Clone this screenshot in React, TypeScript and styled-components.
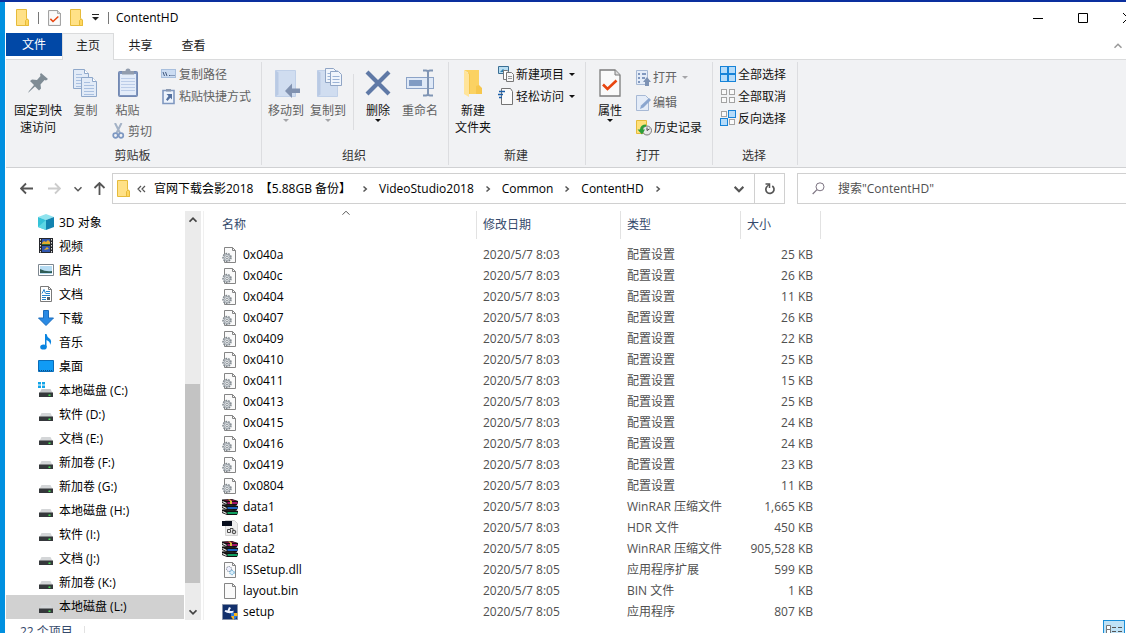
import React from "react";
import styled, { createGlobalStyle, css } from "styled-components";

const GlobalStyle = createGlobalStyle`
  *, *::before, *::after { box-sizing: border-box; }
  html, body, #root { height: 100%; }
  body {
    margin: 0;
    overflow: hidden;
    font: 12px/17px "Open Sans", "Noto Sans CJK SC", sans-serif;
    color: #000;
  }
  button, input {
    font: inherit;
    color: inherit;
    background: none;
    border: 0;
    padding: 0;
    margin: 0;
  }
  a { color: inherit; text-decoration: none; }
  svg { display: block; flex: none; }
`;

/* ---------- desktop and window ---------- */

const Desktop = styled.div`
  height: 100vh;
  overflow: hidden;
  padding: 2px 0 0 6px;
  background: linear-gradient(#0a2f9e, #0a2f9e) top / 100% 2px no-repeat,
    linear-gradient(90deg, #0090e0 0 5px, #fff 5px) 0 0 / 100% 100%;
`;

const Window = styled.main`
  display: flex;
  flex-direction: column;
  width: calc(100% + 24px);
  height: calc(100% + 11px);
  background: #fff;
`;

const TitleBar = styled.header`
  display: flex;
  align-items: center;
  height: 31px;
  flex: none;
  padding-left: 10px;
`;

const QuickAccess = styled.div`
  display: flex;
  align-items: center;
  gap: 9px;
`;

const QuickButton = styled.button`
  display: flex;
`;

const Rule = styled.span`
  width: 1px;
  height: 12px;
  background: #777;
`;

const Title = styled.h1`
  margin: 0 0 0 7px;
  font-size: 12px;
  font-weight: 400;
  flex: 1;
`;

const CaptionButton = styled.button`
  display: flex;
  align-items: center;
  justify-content: center;
  width: 45px;
  height: 30px;
`;

/* ---------- ribbon ---------- */

const Tabs = styled.nav`
  display: flex;
  flex: none;
  height: 27px;
  border-bottom: 1px solid #dadbdc;
`;

const Tab = styled.button<{ $kind?: "file" | "active" }>`
  width: 53px;
  height: 24px;
  color: #222;
  ${(p) =>
    p.$kind === "file" &&
    css`
      width: 56px;
      height: 23px;
      color: #fff;
      background: #0148a6;
    `}
  ${(p) =>
    p.$kind === "active" &&
    css`
      width: 52px;
      height: 27px;
      padding-bottom: 3px;
      background: #f2f3f4;
      border: 1px solid #dadbdc;
      border-bottom: 0;
    `}
`;

const CollapseButton = styled.button`
  display: flex;
  align-items: center;
  margin-left: auto;
  padding-right: 28px;
`;

const Ribbon = styled.section`
  display: flex;
  flex: none;
  height: 108px;
  padding: 2px 0;
  background: #f1f2f4;
  border-bottom: 1px solid #d0d1d3;
`;

const Group = styled.div<{ $width: number }>`
  display: flex;
  flex-direction: column;
  width: ${(p) => p.$width}px;
  border-right: 1px solid #dcdde0;
`;

const GroupBody = styled.div<{ $pad: number }>`
  display: flex;
  flex: 1;
  padding-left: ${(p) => p.$pad}px;
`;

const GroupLabel = styled.div`
  text-align: center;
  height: 18px;
  padding-right: 2px;
  color: #333;
`;

const BigButton = styled.button<{ $width: number; $dim?: boolean }>`
  display: flex;
  flex-direction: column;
  align-items: center;
  width: ${(p) => p.$width}px;
  height: 76px;
  padding-top: 5px;
  color: ${(p) => (p.$dim ? "#626262" : "#111")};
  white-space: nowrap;
`;

const BigIcon = styled.span`
  display: flex;
  align-items: center;
  height: 32px;
  margin-bottom: 3px;
`;

const Stack = styled.div<{ $left?: number; $top?: number }>`
  display: flex;
  flex-direction: column;
  padding-top: ${(p) => p.$top ?? 1}px;
  padding-left: ${(p) => p.$left ?? 0}px;
`;

const PairStack = styled.div`
  display: grid;
  grid-template: 60px 18px / 43px 43px;
`;

const SmallButton = styled.button<{ $height?: number; $dim?: boolean }>`
  display: flex;
  align-items: center;
  gap: 2px;
  height: ${(p) => p.$height ?? 22}px;
  color: ${(p) => (p.$dim ? "#626262" : "#111")};
  white-space: nowrap;
`;

const CutButton = styled(SmallButton)`
  grid-column: 2;
  padding-left: 5px;
  gap: 3px;
`;

const Divider = styled.span`
  width: 1px;
  height: 56px;
  margin: 12px 5px 0 4px;
  background: #dcdde0;
`;

const DropArrow = styled.span<{ $dim?: boolean; $side?: boolean }>`
  border: 3px solid transparent;
  border-top-color: ${(p) => (p.$dim ? "#a5a5a8" : "#111")};
  border-bottom: 0;
  margin-left: ${(p) => (p.$side ? 3 : 0)}px;
`;

/* ---------- address row ---------- */

const AddressRow = styled.div`
  display: flex;
  flex: none;
  height: 36px;
  padding-top: 5px;
`;

const NavButtons = styled.div`
  display: grid;
  grid-template-columns: 28px 28px 20px 22px;
  width: 106px;
  padding-left: 6px;
`;

const IconButton = styled.button`
  display: flex;
  align-items: center;
  justify-content: center;
`;

const AddressBox = styled.div`
  display: flex;
  align-items: center;
  flex: 1;
  border: 1px solid #d0d0d0;
  padding-left: 4px;
  white-space: pre;
`;

const Overflow = styled.button`
  display: flex;
  margin: 0 8px 0 7px;
`;

const Crumb = styled.a``;

const CrumbArrow = styled.span`
  display: flex;
  justify-content: center;
  width: 28px;
`;

const AddressEnd = styled.div`
  display: flex;
  align-self: stretch;
  margin-left: auto;
  button { width: 30px; }
  button + button { border-left: 1px solid #d0d0d0; }
`;

const SearchBox = styled.label`
  display: flex;
  align-items: center;
  gap: 13px;
  width: 353px;
  margin-left: 12px;
  padding-left: 14px;
  border: 1px solid #d0d0d0;
`;

const SearchInput = styled.input`
  flex: 1;
  outline: 0;
  &::placeholder { color: #505050; opacity: 1; }
`;

/* ---------- body ---------- */

const Body = styled.div`
  display: flex;
  flex: 1;
  min-height: 0;
  padding-top: 7px;
`;

const Tree = styled.ul`
  width: 178px;
  margin: 0 1px 0 0;
  padding: 0;
  list-style: none;
  overflow: hidden;
`;

const TreeLink = styled.a<{ $selected?: boolean }>`
  display: flex;
  align-items: center;
  gap: 5px;
  height: 24px;
  padding: 0 0 2px 32px;
  background: ${(p) => (p.$selected ? "#d1d1d1" : "transparent")};
`;

const ScrollBar = styled.div`
  display: flex;
  flex-direction: column;
  width: 16px;
  margin-right: 2px;
  background: #ebebeb;
  button { height: 17px; }
`;

const Track = styled.div<{ $grow: number; $thumb?: boolean }>`
  flex: ${(p) => p.$grow} 0 0;
  margin-right: 1px;
  background: ${(p) => (p.$thumb ? "#c3c3c3" : "transparent")};
`;

const FilePane = styled.section`
  flex: 1;
  overflow: hidden;
  padding-left: 12px;
  border-left: 1px solid #f0f0f0;
`;

const Table = styled.table`
  table-layout: fixed;
  width: 605px;
  border-collapse: collapse;
`;

const Head = styled.th<{ $width: number }>`
  width: ${(p) => p.$width}px;
  height: 33px;
  padding: 0 0 5px;
  font-weight: 400;
  text-align: left;
  color: #34496b;
`;

const HeadCell = styled.div`
  position: relative;
  height: 28px;
  padding-left: 6px;
  line-height: 27px;
  border-right: 1px solid #e2e2e2;
`;

const SortMark = styled.span`
  position: absolute;
  top: -2px;
  left: calc(50% - 4px);
`;

const Cell = styled.td<{ $right?: boolean }>`
  height: 21px;
  padding: 0 8px 0 6px;
  color: #505050;
  white-space: nowrap;
  text-align: ${(p) => (p.$right ? "right" : "left")};
`;

const FileName = styled.a`
  display: flex;
  align-items: center;
  gap: 5px;
  color: #000;
`;

const StatusBar = styled.footer`
  display: flex;
  align-items: center;
  flex: none;
  height: 24px;
  padding: 0 3px 0 14px;
  color: #34496b;
`;

const StatusCount = styled.span`
  padding-right: 11px;
  height: 12px;
  line-height: 12px;
  margin-right: auto;
  border-right: 1px solid #e2e2e2;
`;

const ViewButton = styled.button<{ $on?: boolean }>`
  display: flex;
  justify-content: center;
  width: 22px;
  height: 24px;
  padding-top: 4px;
  border: 1px solid ${(p) => (p.$on ? "#1a8fd8" : "transparent")};
  background: ${(p) => (p.$on ? "#bfe2f6" : "transparent")};
`;

/* ---------- icons ---------- */

const Folder = () => (
  <svg width="13" height="17" viewBox="0 0 13 17">
    <path d="M.5.5h10v9l2 1.500v5.500H.5z" fill="#ffe187" stroke="#e6bb3a" />
    <path d="M9.500 16.500v-5l1.500-1.500 1.500 1v5.500z" fill="#ffd75e" stroke="#e6bb3a" />
  </svg>
);

const CheckPage = ({ w = 13, h = 16 }: { w?: number; h?: number }) => (
  <svg width={w} height={h} viewBox="0 0 22 28" preserveAspectRatio="none">
    <path d="M1 1h15l5 5v21H1z" fill="#fafafa" stroke="#7c7c7c" strokeWidth="1.300" />
    <path d="M16 1v5h5" fill="#ddd" stroke="#7c7c7c" />
    <path d="M4 15.500l4.500 4.500 9-8.500" fill="none" stroke="#e8450f" strokeWidth="2.600" />
  </svg>
);

const Pin = () => (
  <svg width="22" height="22" viewBox="0 0 22 22">
    <path d="M14 1l7 6-2 1.500-1.500-.5-4 4.500.5 4-2 2-4-4-6 5.500L1 21l1-2 5-6-4-4 2-1.500 5 .5 3.500-4-.5-1.500z" fill="#7f8c95" />
  </svg>
);

const CopyIcon = () => (
  <svg width="25" height="28" viewBox="0 0 25 28">
    {[[0, 0], [8, 8]].map(([x, y]) => (
      <g key={x} transform={`translate(${x} ${y})`}>
        <path d="M.5.5h11l4 4v15H.5z" fill="#e2ebf7" stroke="#8fa8ca" />
        <path d="M11.500.5v4h4" fill="#fff" stroke="#8fa8ca" />
        <path d="M3 5.500h6M3 8.500h10M3 11.500h10M3 14.500h10M3 17.500h10" stroke="#a9c0e0" />
      </g>
    ))}
  </svg>
);

const PasteIcon = () => (
  <svg width="20" height="30" viewBox="0 0 20 30">
    <rect x=".5" y="3.500" width="19" height="25" rx="1" fill="#7f95bd" stroke="#7288b2" />
    <rect x="2" y="6" width="16" height="21" fill="#e3ecf9" />
    <path d="M4 6.500V3h3.500Q7.500.5 10 .5T12.500 3H16v3.500z" fill="#929dae" />
    <path d="M3 10.500h14M3 13.500h14M3 16.500h14M3 19.500h14M3 22.500h14" stroke="#bccde8" />
  </svg>
);

const Scissors = () => (
  <svg width="13" height="16" viewBox="0 0 13 16">
    <path d="M3 0l5 10M9.500 0L4.500 10" stroke="#a3b2c6" strokeWidth="2" />
    <circle cx="3.500" cy="12.500" r="2.300" fill="none" stroke="#7d98c2" strokeWidth="1.700" />
    <circle cx="9" cy="12.500" r="2.300" fill="none" stroke="#7d98c2" strokeWidth="1.700" />
  </svg>
);

const CopyPath = () => (
  <svg width="16" height="10" viewBox="0 0 16 10">
    <rect x=".5" y=".5" width="14" height="8" fill="#cbdcf2" stroke="#a8bfdd" />
    <path d="M2 3l1.500 4M4.500 3L6 7M8 6.500h1.500M10.500 6.500h1M12.500 6.500h1" stroke="#42597e" />
  </svg>
);

const PasteShortcut = () => (
  <svg width="16" height="17" viewBox="0 0 16 17">
    <path d="M2 2.500h11v13H2z" fill="#eef4fc" stroke="#8098c0" strokeWidth="1.600" />
    <path d="M5 1h5v2.500H5z" fill="#8b9ab2" />
    <path d="M5.500 6H11v5.500L9.300 9.800 6.500 13 5 11.500 7.500 8z" fill="#54719f" />
  </svg>
);

const Book = ({ children }: { children: React.ReactNode }) => (
  <svg width="28" height="30" viewBox="0 0 28 30">
    <path d="M3.500 2.500h20v26h-20z" fill="#d0ddf0" stroke="#c0d0e8" />
    <path d="M3.500 2.500l3 2v22l-3 2z" fill="#b9cae4" />
    {children}
  </svg>
);

const MoveTo = () => (
  <Book>
    <path d="M28 20.500h-8v-5l-7 7.500 7 7v-5h8z" fill="#8192b0" />
  </Book>
);

const CopyTo = () => (
  <Book>
    {[[11, 0], [16, 3]].map(([x, y]) => (
      <g key={x} transform={`translate(${x} ${y})`}>
        <path d="M.5.5h8l3 3v11H.5z" fill="#f0f5fc" stroke="#90a5c5" />
        <path d="M2.500 5.500h7M2.500 8.500h7M2.500 11.500h7" stroke="#9bb3d6" />
      </g>
    ))}
  </Book>
);

const DeleteIcon = () => (
  <svg width="26" height="26" viewBox="0 0 26 26">
    <path d="M2 2l22 22M24 2L2 24" stroke="#5f79a6" strokeWidth="4.200" />
  </svg>
);

const RenameIcon = () => (
  <svg width="28" height="28" viewBox="0 0 28 28">
    <rect x=".5" y="8.500" width="27" height="11" fill="#dfe9f7" stroke="#8ca3c7" />
    <rect x="3" y="11" width="13" height="6" fill="#809bc3" />
    <path d="M17 1.500h3q2 0 2 2v21q0 2-2 2h-3M27 1.500h-3q-2 0-2 2M22 24.500q0 2 2 2h3" fill="none" stroke="#8095b4" strokeWidth="2" />
  </svg>
);

const NewFolder = () => (
  <svg width="20" height="29" viewBox="0 0 20 29">
    <path d="M5 1h11v15l3 3v6H5z" fill="#f6c74d" />
    <path d="M5 1h11v15l-3 1v8H7V5L1 1z" fill="#fbd262" />
    <path d="M1 1l5 4v23l-5-3z" fill="#ffe49a" />
  </svg>
);

const NewItem = () => (
  <svg width="16" height="16" viewBox="0 0 16 16">
    <path d="M.5.5h10v7H.5z" fill="#b9def2" stroke="#3a6f94" />
    <path d="M2 6l3-3 3 3z" fill="#2d7fae" />
    <path d="M5.500 4.500h4l1.500 2v7H5.500z" fill="#fff" stroke="#777" />
    <path d="M8.500 6.500h5l2 2v7h-7z" fill="#f7f7f7" stroke="#777" />
    <path d="M10 10.500h4M10 12.500h4" stroke="#999" />
  </svg>
);

const EasyAccess = () => (
  <svg width="16" height="17" viewBox="0 0 16 17">
    <path d="M3.500.5h9l2 3v13h-11z" fill="#fafafa" stroke="#747474" />
    <path d="M1 3.500h6M0 6.500h5M1 9.500h3" stroke="#1d5fa8" strokeWidth="1.500" />
  </svg>
);

const OpenIcon = () => (
  <svg width="15" height="16" viewBox="0 0 15 16">
    <path d="M.5.5h11v14H.5z" fill="#e4ecf8" stroke="#a7b9d5" />
    <path d="M2 3h2v2H2zM2 7h2v2H2zM2 11h2v2H2zM6 3h4v2H6zM6 7h3v2H6z" fill="#8198bf" />
    <path d="M9 16v-4H7l4-5 4 5h-2v4z" fill="#7d92b4" />
  </svg>
);

const EditIcon = () => (
  <svg width="15" height="16" viewBox="0 0 15 16">
    <path d="M.5.5h9l3 3v12H.5z" fill="#e4ecf8" stroke="#a7b9d5" />
    <path d="M4 14l1-3.500L13 3l2 2-7.500 7.500z" fill="#8ba6cf" />
  </svg>
);

const HistoryIcon = () => (
  <svg width="16" height="16" viewBox="0 0 16 16">
    <path d="M.5.5h10v13H.5z" fill="#ffe07a" stroke="#e6bb3a" />
    <circle cx="11" cy="10.500" r="4.500" fill="#e9e9e9" stroke="#7b7b7b" />
    <path d="M11 7.500v3l2.500-1.500" fill="none" stroke="#444" />
    <path d="M10 4.500Q4.500 4.500 4 9.500H1.500L6 14.500 9 9.500H7Q7 6.500 10 6.500z" fill="#2e9e3a" />
  </svg>
);

const SelectIcon = ({ on }: { on: number[] }) => (
  <svg width="16" height="16" viewBox="0 0 16 16">
    {[0, 1, 2, 3].map((i) => {
      const lit = on.includes(i);
      const inset = lit ? 0 : 1;
      return (
        <rect
          key={i}
          x={(i % 2) * 8 + 0.5 + inset}
          y={Math.floor(i / 2) * 8 + 0.5 + inset}
          width={7 - inset * 2}
          height={7 - inset * 2}
          fill={lit ? "#b5dcfa" : "#fafafa"}
          stroke={lit ? "#1683d8" : "#a3a3a3"}
        />
      );
    })}
  </svg>
);

const Arrow = ({ turn = 0, color = "#555" }: { turn?: number; color?: string }) => (
  <svg width="13" height="13" viewBox="0 0 13 13">
    <path d="M6 1.500L1 6.500l5 5M1 6.500h12" transform={`rotate(${turn} 6.500 6.500)`} fill="none" stroke={color} strokeWidth="1.800" />
  </svg>
);

const Chevron = ({ turn = 0, size = 8, color = "#555", weight = 1.5 }: { turn?: number; size?: number; color?: string; weight?: number }) => (
  <svg width={size} height={size} viewBox="0 0 8 8">
    <path d={turn === -90 ? "M1.500 2.500L4 5.300 6.500 2.500" : "M.5 2.300L4 5.800 7.500 2.300"} transform={`rotate(${turn} 4 4)`} fill="none" stroke={color} strokeWidth={weight} />
  </svg>
);

const Refresh = () => (
  <svg width="12" height="12" viewBox="0 0 12 12">
    <path d="M8.300 3A4.100 4.100 0 1 1 2.800 3.700" fill="none" stroke="#555" strokeWidth="1.700" />
    <path d="M1.500 1.500H5.500V5.500" fill="none" stroke="#555" strokeWidth="1.500" transform="translate(0 -.5)" />
    <path d="M2.500 4L5 1.500" stroke="#555" strokeWidth="1.200" />
  </svg>
);

const Magnifier = () => (
  <svg width="13" height="13" viewBox="0 0 13 13">
    <circle cx="8" cy="4.800" r="4" fill="none" stroke="#7d7482" />
    <path d="M5 7.700L.7 12" stroke="#7d7482" strokeWidth="1.200" />
  </svg>
);

const treeIcons = {
  cube: (
    <>
      <path d="M0 3l8-3 8 3-8 3z" fill="#8fe3ee" />
      <path d="M0 3l8 3v10l-8-3z" fill="#35c3d8" />
      <path d="M16 3L8 6v10l8-3z" fill="#1283b0" />
      <path d="M0 13l8-7v10z" fill="#5cd6e4" />
    </>
  ),
  video: (
    <>
      <path d="M1 0h14v15H1z" fill="#25272c" />
      <path d="M4 1h8v6H4zM4 8h8v6H4z" fill="#3157b0" />
      <path d="M4 5l2-2 2 1 2-2 2 2v3H4zM6 12l3-3 2 2z" fill="#e3ac2b" />
      <path d="M4 6h8v1H4z" fill="#2c6a3a" />
      <path d="M2.500 1v14M13.500 1v14" stroke="#ddd" strokeDasharray="1.500 1.500" />
    </>
  ),
  picture: (
    <>
      <path d="M.5 2.500h15v11H.5z" fill="#fff" stroke="#7d8790" />
      <path d="M2 4h12v8H2z" fill="#b6dcf3" />
      <path d="M2 7q6 3 12 2v2H2z" fill="#2e5d57" />
    </>
  ),
  document: (
    <>
      <path d="M2.500.5h8l3 3v12h-11z" fill="#fff" stroke="#7a7a7a" />
      <path d="M10.500.5v3h3" fill="none" stroke="#7a7a7a" />
      <path d="M8 5.500h4M8 7.500h4M4 9.500h8M4 11.500h4M4 13.500h4M4 7.500l2-4 1.500 4" fill="none" stroke="#2582cc" />
      <path d="M9 11h3v3H9z" fill="#50606c" />
    </>
  ),
  download: <path d="M5.500.5h5v7.500h5L8 15.500.5 8h5z" fill="#2a8ae4" stroke="#1a6dbd" />,
  music: (
    <>
      <path d="M7 0h1.500q.5 3 3 4.500 3 2.500.5 6.500.5-3.500-3.500-5v7H7z" fill="#0a84e0" />
      <ellipse cx="5.500" cy="13" rx="3.300" ry="2.600" fill="#0a84e0" />
    </>
  ),
  desktop: (
    <>
      <path d="M.5 2.500h15v11H.5z" fill="#109bf5" stroke="#0a6cb8" />
      <path d="M1 12.500h14" stroke="#0b4f88" strokeDasharray="1 1" />
    </>
  ),
  drive: (
    <>
      <path d="M3.500 7h9l2 4h-13z" fill="#d4d6d8" />
      <path d="M1 10.500h14V15H1z" fill="#35383b" />
      <path d="M10.500 12.500h2V14h-2z" fill="#43e052" />
    </>
  ),
  system: (
    <>
      <path d="M0 0h3v2.500H0zM4 0h3v2.500H4zM0 3.500h3V6H0zM4 3.500h3V6H4z" fill="#12a4e8" />
      <path d="M3.500 7h9l2 4h-13z" fill="#c4c7ca" />
      <path d="M1 10.500h14V15H1z" fill="#35383b" />
      <path d="M10.500 12.500h2V14h-2z" fill="#43e052" />
    </>
  ),
};

const BlankPage = () => (
  <>
    <path d="M2.500.5h8l3 3v12h-11z" fill="#fafafa" stroke="#858585" />
    <path d="M10.500.5v3h3" fill="none" stroke="#858585" />
  </>
);

const fileIcons = {
  config: (
    <>
      <BlankPage />
      <circle cx="5" cy="10.500" r="4" fill="#e4e8eb" stroke="#7f878d" strokeWidth="1.500" strokeDasharray="1.700 1.100" />
      <circle cx="5" cy="10.500" r="3" fill="#dde2e6" stroke="#8b9399" strokeWidth=".8" />
      <circle cx="5" cy="10.500" r="1.200" fill="#fff" stroke="#7f878d" strokeWidth=".8" />
    </>
  ),
  rar: (
    <>
      {["#a01465", "#1c62c0", "#10a060"].map((c, i) => (
        <g key={c} transform={`translate(0 ${i * 5})`}>
          <path d="M0 .5L10 0l6 2v1.500l-1 2.500H5L0 4z" fill="#111" />
          <path d="M1 1l9-.5L15 2H5.500z" fill={i ? "#222" : "#7b0f3e"} />
          <path d="M5.500 3h10v2h-10z" fill={c} />
          <path d="M.5 2.500l4 2" stroke="#eee" strokeWidth="1.200" />
        </g>
      ))}
      <path d="M6 .5h2l2 1.500v3H8V2z" fill="#e0b93c" />
    </>
  ),
  hdr: (
    <>
      <path d="M3.500.5h9l3 3v12h-12z" fill="#eee" stroke="#d2d2d2" />
      <path d="M0 1h10v5H0z" fill="#070d1c" />
      <path d="M5.500 12.500v-3h3v3zM8 8.500h3v3" fill="none" stroke="#4c4c4c" />
      <circle cx="12" cy="12" r="1.800" fill="#ccc" stroke="#444" />
    </>
  ),
  dll: (
    <>
      <BlankPage />
      <circle cx="7" cy="7" r="2.500" fill="#eef" stroke="#7e8c96" strokeDasharray="1.500 .7" />
      <circle cx="10" cy="10.500" r="2.200" fill="#d7edfa" stroke="#5aa2cc" strokeDasharray="1.500 .7" />
    </>
  ),
  blank: <BlankPage />,
  setup: (
    <>
      <path d="M.5.5h15v15H.5z" fill="#12306c" stroke="#8792a8" />
      <path d="M7 3l2 1-1.500 2.500q1.500 1 4 0v2q-5 2-9-1l1-1.500 2 .5z" fill="#eef3ff" />
      <path d="M9 9h3v3H9zM12 12h3q-.5 2.500-3 4z" fill="#2a7be0" />
      <path d="M12 9h3.500v3H12zM9 12h3v4q-2.500-1.500-3-4z" fill="#f7b51c" />
    </>
  ),
};

const Icon16 = ({ children }: { children: React.ReactNode }) => (
  <svg width="16" height="16" viewBox="0 0 16 16">{children}</svg>
);

/* ---------- data ---------- */

const places: [keyof typeof treeIcons, string][] = [
  ["cube", "3D 对象"],
  ["video", "视频"],
  ["picture", "图片"],
  ["document", "文档"],
  ["download", "下载"],
  ["music", "音乐"],
  ["desktop", "桌面"],
  ["system", "本地磁盘 (C:)"],
  ["drive", "软件 (D:)"],
  ["drive", "文档 (E:)"],
  ["drive", "新加卷 (F:)"],
  ["drive", "新加卷 (G:)"],
  ["drive", "本地磁盘 (H:)"],
  ["drive", "软件 (I:)"],
  ["drive", "文档 (J:)"],
  ["drive", "新加卷 (K:)"],
  ["drive", "本地磁盘 (L:)"],
];

type FileRow = [keyof typeof fileIcons, string, string, string, string];

const configFiles: FileRow[] = [
  ["0x040a", "25 KB"],
  ["0x040c", "26 KB"],
  ["0x0404", "11 KB"],
  ["0x0407", "26 KB"],
  ["0x0409", "22 KB"],
  ["0x0410", "25 KB"],
  ["0x0411", "15 KB"],
  ["0x0413", "25 KB"],
  ["0x0415", "24 KB"],
  ["0x0416", "24 KB"],
  ["0x0419", "23 KB"],
  ["0x0804", "11 KB"],
].map(([name, size]) => ["config", name, "2020/5/7 8:03", "配置设置", size]);

const files: FileRow[] = [
  ...configFiles,
  ["rar", "data1", "2020/5/7 8:03", "WinRAR 压缩文件", "1,665 KB"],
  ["hdr", "data1", "2020/5/7 8:03", "HDR 文件", "450 KB"],
  ["rar", "data2", "2020/5/7 8:05", "WinRAR 压缩文件", "905,528 KB"],
  ["dll", "ISSetup.dll", "2020/5/7 8:05", "应用程序扩展", "599 KB"],
  ["blank", "layout.bin", "2020/5/7 8:05", "BIN 文件", "1 KB"],
  ["setup", "setup", "2020/5/7 8:05", "应用程序", "807 KB"],
];

const crumbs = ["官网下载会影2018  【5.88GB 备份】", "VideoStudio2018", "Common", "ContentHD"];

/* ---------- parts ---------- */

type BigProps = {
  icon: React.ReactNode;
  width: number;
  lines: string[];
  dim?: boolean;
  drop?: boolean;
};

const Big = ({ icon, width, lines, dim, drop }: BigProps) => (
  <BigButton type="button" $width={width} $dim={dim}>
    <BigIcon>{icon}</BigIcon>
    {lines.map((line) => (
      <span key={line}>{line}</span>
    ))}
    {drop && <DropArrow $dim={dim} />}
  </BigButton>
);

type SmallProps = {
  icon: React.ReactNode;
  text: string;
  height?: number;
  dim?: boolean;
  drop?: boolean;
};

const Small = ({ icon, text, height, dim, drop }: SmallProps) => (
  <SmallButton type="button" $height={height} $dim={dim}>
    {icon}
    {text}
    {drop && <DropArrow $dim={dim} $side />}
  </SmallButton>
);

const RibbonGroup = ({ label, width, pad, children }: { label: string; width: number; pad: number; children: React.ReactNode }) => (
  <Group $width={width}>
    <GroupBody $pad={pad}>{children}</GroupBody>
    <GroupLabel>{label}</GroupLabel>
  </Group>
);

export default function App() {
  return (
    <Desktop>
      <GlobalStyle />
      <Window>
        <TitleBar>
          <QuickAccess>
            <Folder />
            <Rule />
            <QuickButton type="button" aria-label="属性"><CheckPage /></QuickButton>
            <QuickButton type="button" aria-label="新建文件夹"><Folder /></QuickButton>
            <QuickButton type="button" aria-label="自定义快速访问工具栏">
              <svg width="7" height="7" viewBox="0 0 7 7">
                <path d="M0 .5h7" stroke="#222" />
                <path d="M0 3h7L3.500 6.500z" fill="#222" />
              </svg>
            </QuickButton>
            <Rule />
          </QuickAccess>
          <Title>ContentHD</Title>
          <CaptionButton type="button" aria-label="最小化">
            <svg width="10" height="10"><path d="M0 5.500h10" stroke="#000" /></svg>
          </CaptionButton>
          <CaptionButton type="button" aria-label="最大化">
            <svg width="10" height="10"><path d="M.5.5h9v9h-9z" fill="none" stroke="#000" /></svg>
          </CaptionButton>
          <CaptionButton type="button" aria-label="关闭">
            <svg width="10" height="10"><path d="M0 0l10 10M10 0L0 10" stroke="#000" /></svg>
          </CaptionButton>
        </TitleBar>

        <Tabs>
          <Tab type="button" $kind="file">文件</Tab>
          <Tab type="button" $kind="active">主页</Tab>
          <Tab type="button">共享</Tab>
          <Tab type="button">查看</Tab>
          <CollapseButton type="button" aria-label="最小化功能区">
            <Chevron turn={180} color="#999" />
          </CollapseButton>
        </Tabs>

        <Ribbon>
          <RibbonGroup label="剪贴板" width={256} pad={6}>
            <Big icon={<Pin />} width={52} lines={["固定到快", "速访问"]} />
            <PairStack>
              <Big icon={<CopyIcon />} width={43} lines={["复制"]} dim />
              <Big icon={<PasteIcon />} width={41} lines={["粘贴"]} dim />
              <CutButton type="button" $height={18} $dim><Scissors />剪切</CutButton>
            </PairStack>
            <Stack $left={11}>
              <Small icon={<CopyPath />} text="复制路径" dim />
              <Small icon={<PasteShortcut />} text="粘贴快捷方式" dim />
            </Stack>
          </RibbonGroup>
          <RibbonGroup label="组织" width={187} pad={3}>
            <Big icon={<MoveTo />} width={42} lines={["移动到"]} dim drop />
            <Big icon={<CopyTo />} width={42} lines={["复制到"]} dim drop />
            <Divider />
            <Big icon={<DeleteIcon />} width={38} lines={["删除"]} drop />
            <Big icon={<RenameIcon />} width={46} lines={["重命名"]} dim />
          </RibbonGroup>
          <RibbonGroup label="新建" width={137} pad={2}>
            <Big icon={<NewFolder />} width={44} lines={["新建", "文件夹"]} />
            <Stack $left={3}>
              <Small icon={<NewItem />} text="新建项目" drop />
              <Small icon={<EasyAccess />} text="轻松访问" drop />
            </Stack>
          </RibbonGroup>
          <RibbonGroup label="打开" width={127} pad={4}>
            <Big icon={<CheckPage w={22} h={28} />} width={40} lines={["属性"]} drop />
            <Stack $left={6} $top={3}>
              <Small icon={<OpenIcon />} text="打开" height={25} dim drop />
              <Small icon={<EditIcon />} text="编辑" height={25} dim />
              <Small icon={<HistoryIcon />} text="历史记录" height={25} />
            </Stack>
          </RibbonGroup>
          <RibbonGroup label="选择" width={85} pad={7}>
            <Stack>
              <Small icon={<SelectIcon on={[0, 1, 2, 3]} />} text="全部选择" />
              <Small icon={<SelectIcon on={[]} />} text="全部取消" />
              <Small icon={<SelectIcon on={[1, 2]} />} text="反向选择" />
            </Stack>
          </RibbonGroup>
        </Ribbon>

        <AddressRow>
          <NavButtons>
            <IconButton type="button" aria-label="后退"><Arrow /></IconButton>
            <IconButton type="button" aria-label="前进"><Arrow turn={180} color="#ccc" /></IconButton>
            <IconButton type="button" aria-label="最近浏览的位置"><Chevron /></IconButton>
            <IconButton type="button" aria-label="向上"><Arrow turn={90} /></IconButton>
          </NavButtons>
          <AddressBox>
            <Folder />
            <Overflow type="button" aria-label="更多位置">
              <svg width="9" height="8" viewBox="0 0 9 8">
                <path d="M4 1L1 4l3 3M8 1L5 4l3 3" fill="none" stroke="#555" strokeWidth="1.200" />
              </svg>
            </Overflow>
            {crumbs.map((crumb) => (
              <React.Fragment key={crumb}>
                <Crumb href="#">{crumb}</Crumb>
                <CrumbArrow><Chevron turn={-90} /></CrumbArrow>
              </React.Fragment>
            ))}
            <AddressEnd>
              <IconButton type="button" aria-label="上一个位置"><Chevron size={10} weight={1.7} /></IconButton>
              <IconButton type="button" aria-label="刷新"><Refresh /></IconButton>
            </AddressEnd>
          </AddressBox>
          <SearchBox>
            <Magnifier />
            <SearchInput type="search" aria-label="搜索" placeholder={'搜索"ContentHD"'} />
          </SearchBox>
        </AddressRow>

        <Body>
          <Tree>
            {places.map(([icon, name]) => (
              <li key={name}>
                <TreeLink href="#" $selected={name === "本地磁盘 (L:)"}>
                  <Icon16>{treeIcons[icon]}</Icon16>
                  {name}
                </TreeLink>
              </li>
            ))}
          </Tree>
          <ScrollBar>
            <IconButton type="button" aria-label="向上滚动"><Chevron turn={180} color="#444" weight={1.8} /></IconButton>
            <Track $grow={156} />
            <Track $grow={199} $thumb />
            <Track $grow={20} />
            <IconButton type="button" aria-label="向下滚动"><Chevron color="#444" weight={1.8} /></IconButton>
          </ScrollBar>
          <FilePane>
            <Table>
              <thead>
                <tr>
                  <Head $width={261}>
                    <HeadCell>
                      名称
                      <SortMark><Chevron turn={180} weight={1} /></SortMark>
                    </HeadCell>
                  </Head>
                  <Head $width={144}><HeadCell>修改日期</HeadCell></Head>
                  <Head $width={120}><HeadCell>类型</HeadCell></Head>
                  <Head $width={80}><HeadCell>大小</HeadCell></Head>
                </tr>
              </thead>
              <tbody>
                {files.map(([icon, name, date, kind, size], i) => (
                  <tr key={i}>
                    <Cell>
                      <FileName href="#">
                        <Icon16>{fileIcons[icon]}</Icon16>
                        {name}
                      </FileName>
                    </Cell>
                    <Cell>{date}</Cell>
                    <Cell>{kind}</Cell>
                    <Cell $right>{size}</Cell>
                  </tr>
                ))}
              </tbody>
            </Table>
          </FilePane>
        </Body>

        <StatusBar>
          <StatusCount>22 个项目</StatusCount>
          <ViewButton type="button" $on aria-label="详细信息">
            <svg width="16" height="14" viewBox="0 0 16 14">
              <path d="M.5.5h4v4h-4zM.5 4.500h4v4h-4zM.5 8.500h4v4h-4z" fill="#fff" stroke="#777" />
              <path d="M6 2.500h4M12 2.500h4M6 6.500h4M12 6.500h4M6 10.500h4M12 10.500h4" stroke="#555" />
            </svg>
          </ViewButton>
          <ViewButton type="button" aria-label="大图标" />
        </StatusBar>
      </Window>
    </Desktop>
  );
}
